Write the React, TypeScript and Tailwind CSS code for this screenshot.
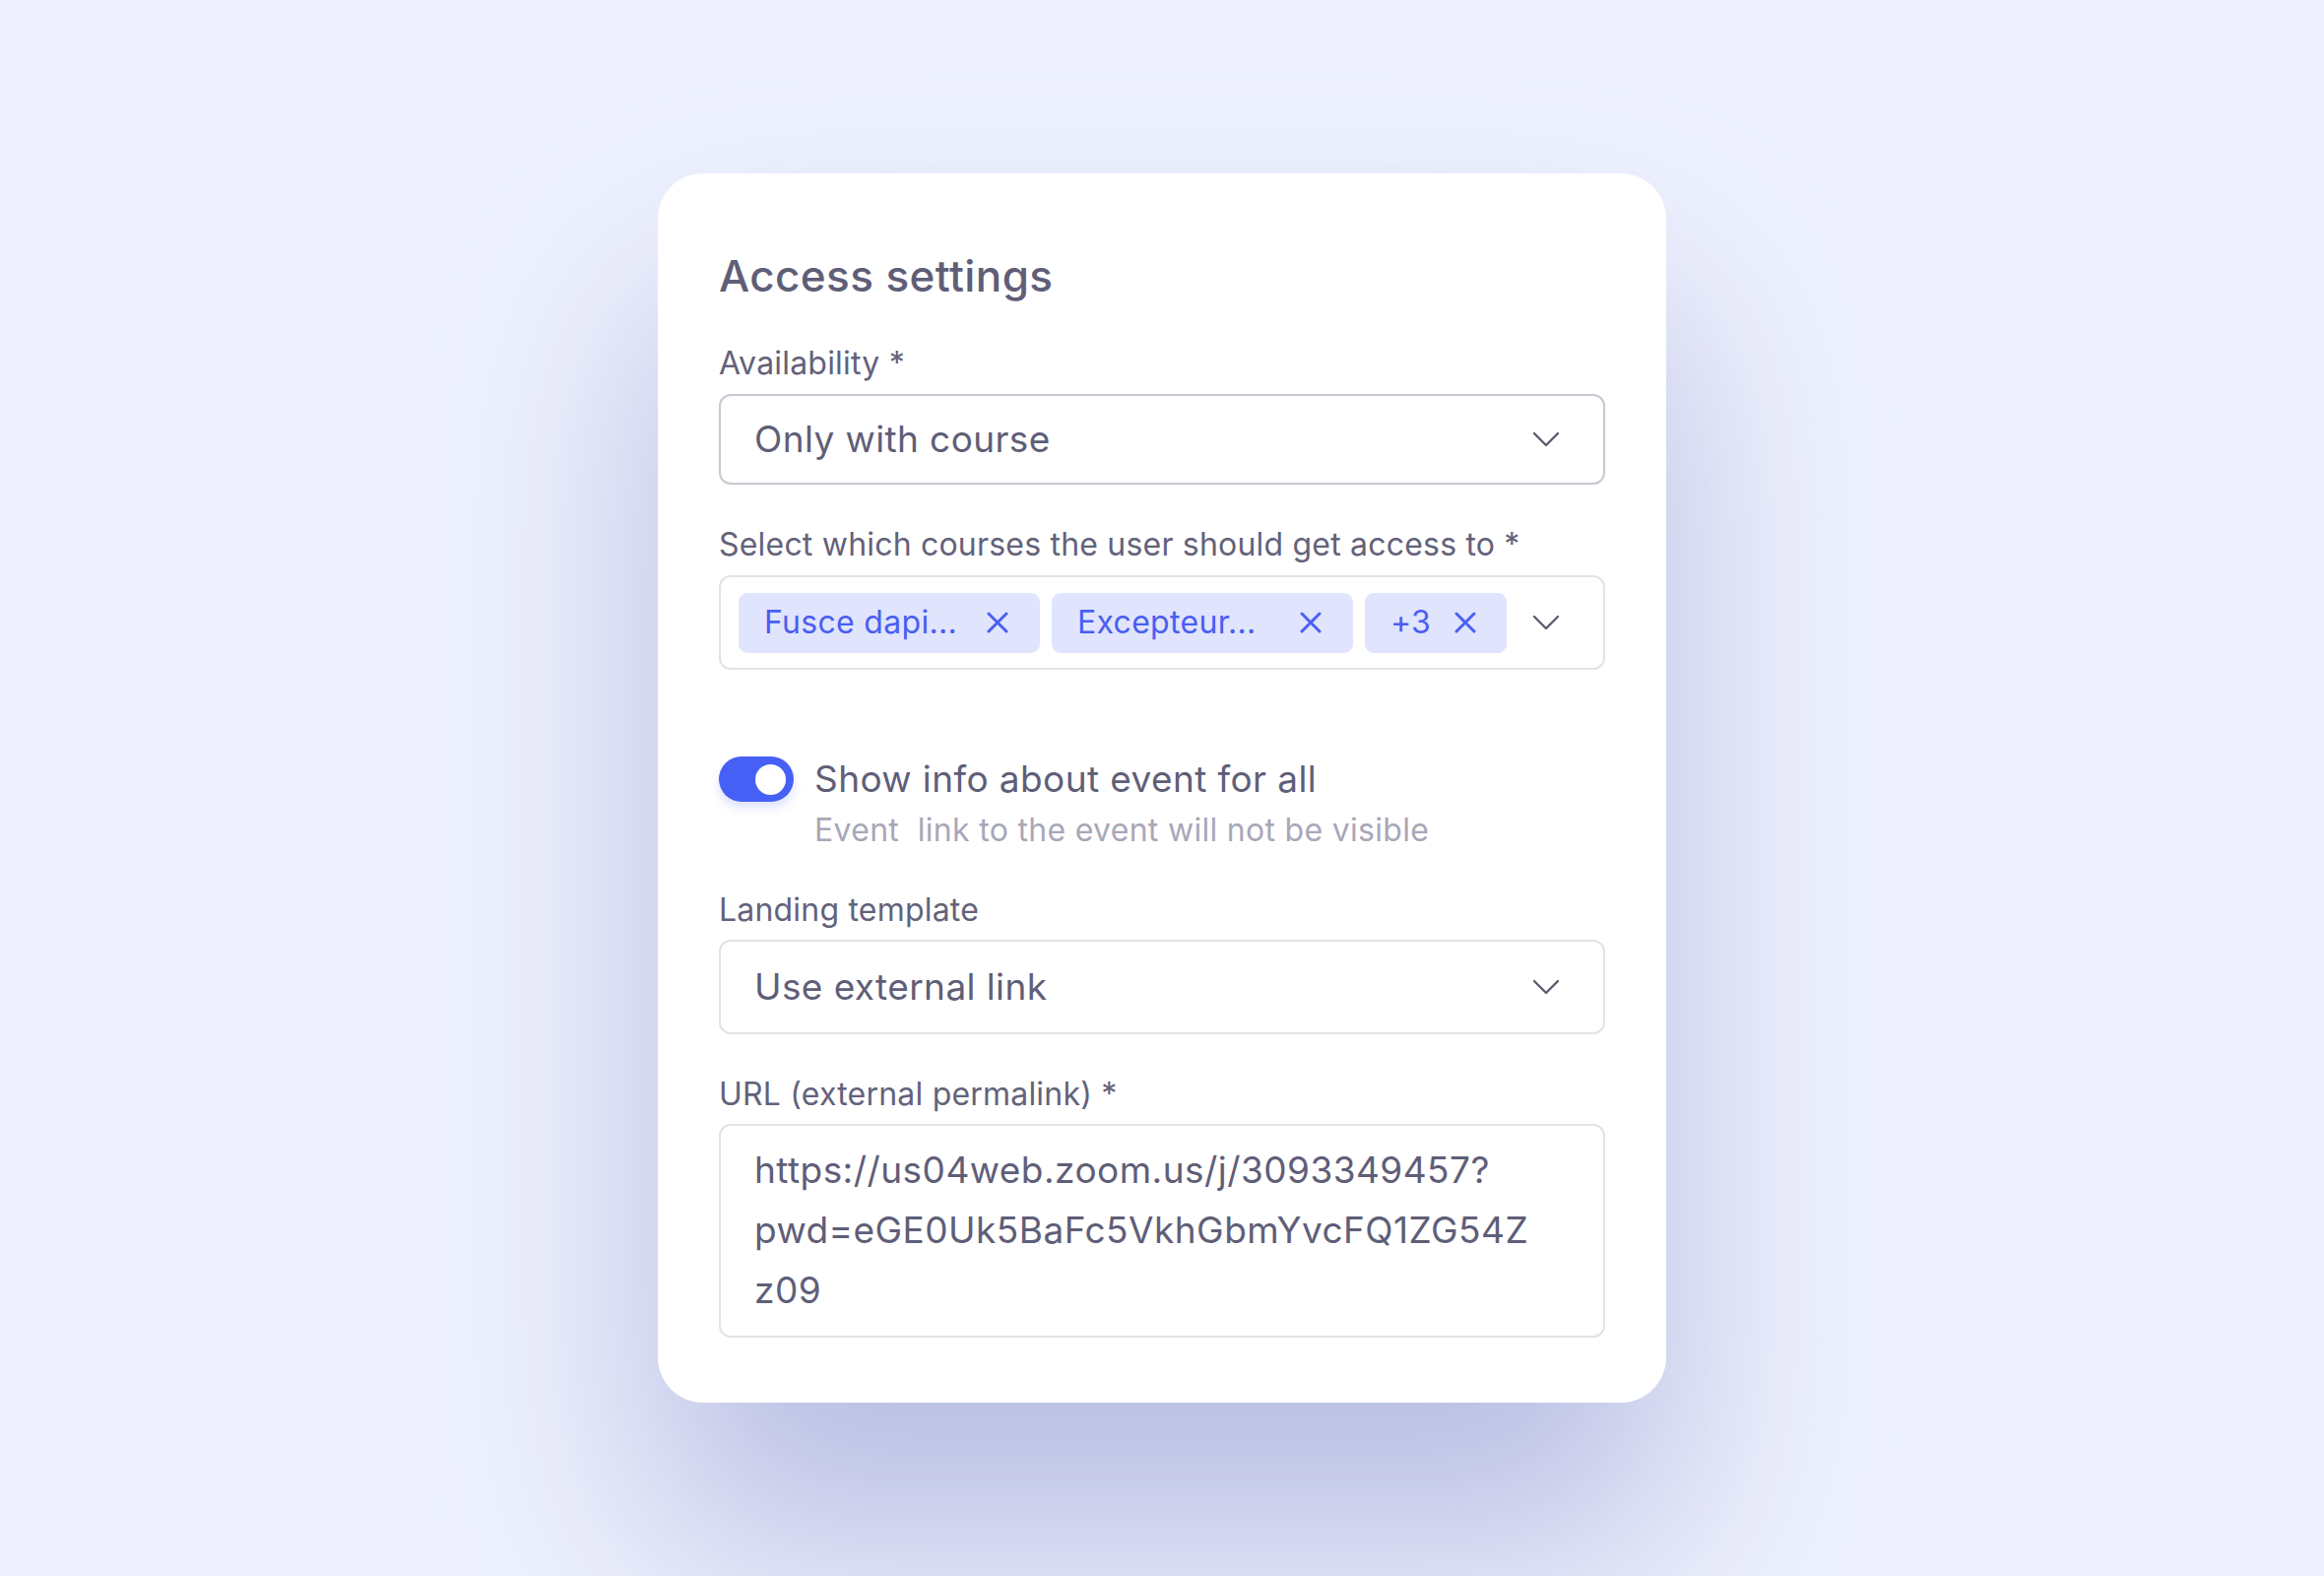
import { useState } from "react";

const Chevron = () => (
  <svg width="28" height="16" viewBox="0 0 28 16" fill="none" className="shrink-0">
    <polyline points="2,2 14,14 26,2" stroke="#5c5b70" strokeWidth="2.4" strokeLinecap="round" strokeLinejoin="round" />
  </svg>
);

const XIcon = () => (
  <svg width="22" height="22" viewBox="0 0 22 22" fill="none" className="shrink-0">
    <path d="M2 2L20 20M20 2L2 20" stroke="#4a5ef2" strokeWidth="3" strokeLinecap="round" />
  </svg>
);

const Chip = ({ label, wide }: { label: string; wide?: boolean }) => (
  <div
    className={
      wide
        ? "flex h-[61px] w-[306px] shrink-0 items-center justify-between rounded-[9px] bg-[#e0e4fd] pl-[26px] pr-[32px]"
        : "flex h-[61px] shrink-0 items-center gap-[24px] rounded-[9px] bg-[#e0e4fd] pl-[26px] pr-[31px]"
    }
  >
    <span className="text-[32px] leading-none tracking-[0.3px] text-[#4a5ef2]">{label}</span>
    <XIcon />
  </div>
);

const Label = ({ children }: { children: React.ReactNode }) => (
  <div className="text-[32px] leading-[40px] tracking-[0.2px] text-[#63627a]">{children}</div>
);

export default function App() {
  const [showInfo, setShowInfo] = useState(true);

  return (
    <div
      className="flex min-h-screen w-full justify-center bg-[#eef1fd] pt-[176px]"
      style={{ fontFamily: "Inter, 'Noto Sans', sans-serif" }}
    >
      <div className="flex h-[1248px] w-[1024px] flex-col rounded-[46px] bg-white px-[62px] pt-[76px] shadow-[0_140px_220px_rgba(140,148,205,0.55)]">
        <h1 className="text-[44px] font-medium leading-[56px] tracking-[0.4px] text-[#5f5e78]">Access settings</h1>

        <div className="mt-[41px]">
          <Label>Availability *</Label>
          <div className="mt-[11px] flex h-[92px] items-center justify-between rounded-[12px] border-2 border-[#c9c8d0] pl-[34px] pr-[44px]">
            <span className="text-[37px] tracking-[0.4px] text-[#5f5e78]">Only with course</span>
            <Chevron />
          </div>
        </div>

        <div className="mt-[41px]">
          <Label>Select which courses the user should get access to *</Label>
          <div className="mt-[11px] flex h-[96px] items-center rounded-[12px] border-2 border-[#e2e2e7] pl-[18px] pr-[44px]">
            <div className="flex gap-[12px]">
              <Chip label="Fusce dapi..." wide />
              <Chip label="Excepteur..." wide />
              <Chip label="+3" />
            </div>
            <div className="ml-auto">
              <Chevron />
            </div>
          </div>
        </div>

        <div className="mt-[88px] flex items-start gap-[21px]">
          <button
            onClick={() => setShowInfo(!showInfo)}
            className={
              showInfo
                ? "flex h-[46px] w-[76px] shrink-0 items-center justify-end rounded-full bg-[#4660f5] px-[8px] shadow-[0_6px_10px_rgba(70,96,245,0.18)]"
                : "flex h-[46px] w-[76px] shrink-0 items-center justify-start rounded-full bg-[#d4d4dc] px-[8px]"
            }
          >
            <span className="block h-[31px] w-[31px] rounded-full bg-white" />
          </button>
          <div className="flex flex-col">
            <span className="text-[37px] leading-[46px] tracking-[0.4px] text-[#5f5e78]">Show info about event for all</span>
            <span className="mt-[9px] whitespace-pre text-[32px] leading-[40px] tracking-[0.3px] text-[#a8a7b8]">
              Event  link to the event will not be visible
            </span>
          </div>
        </div>

        <div className="mt-[41px]">
          <Label>Landing template</Label>
          <div className="mt-[10px] flex h-[96px] items-center justify-between rounded-[12px] border-2 border-[#e2e2e7] pl-[34px] pr-[44px]">
            <span className="text-[37px] tracking-[0.4px] text-[#5f5e78]">Use external link</span>
            <Chevron />
          </div>
        </div>

        <div className="mt-[41px]">
          <Label>URL (external permalink) *</Label>
          <div className="mt-[10px] h-[217px] rounded-[12px] border-2 border-[#e2e2e7] pl-[34px] pr-[30px] pt-[14px]">
            <div className="text-[37px] leading-[61px] tracking-[0.45px] text-[#5f5e78]">
              <div>https://us04web.zoom.us/j/3093349457?</div>
              <div>pwd=eGE0Uk5BaFc5VkhGbmYvcFQ1ZG54Z</div>
              <div>z09</div>
            </div>
          </div>
        </div>
      </div>
    </div>
  );
}
